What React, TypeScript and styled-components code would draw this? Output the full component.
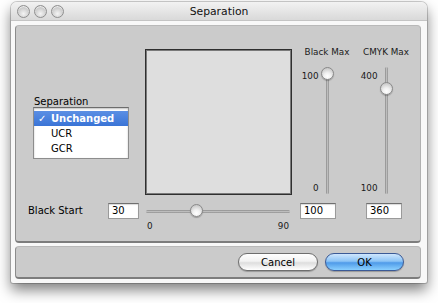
import React from "react";
import styled, { createGlobalStyle } from "styled-components";

const Global = createGlobalStyle`
  html, body { margin: 0; padding: 0; background: #ffffff; }
  body {
    width: 438px; height: 303px; overflow: hidden;
    font-family: "DejaVu Sans", "Lucida Grande", sans-serif;
    color: #000;
  }
  * { box-sizing: border-box; }
`;

const Page = styled.div`
  padding: 2px 0 0 11px;
`;

const Window = styled.div`
  width: 416px;
  height: 281px;
  background: #f8f8f8;
  border-radius: 6px 6px 2px 2px;
  box-shadow: 0 0 0 1px rgba(0, 0, 0, 0.18), 0 7px 14px rgba(0, 0, 0, 0.5);
  display: flex;
  flex-direction: column;
  overflow: hidden;
`;

const TitleBar = styled.div`
  height: 19px;
  flex: none;
  display: flex;
  align-items: center;
  position: relative;
  background: linear-gradient(#f2f2f2, #d9d9d9);
  border-bottom: 1px solid #c4c4c4;
`;

const Lights = styled.div`
  display: flex;
  gap: 4px;
  padding-left: 6px;
`;

const Light = styled.span`
  width: 13px;
  height: 13px;
  border-radius: 50%;
  border: 1px solid #8f8f8f;
  background: radial-gradient(circle at 50% 70%, #f4f4f4 0%, #cfcfcf 55%, #a9a9a9 100%);
  box-shadow: inset 0 1px 1px rgba(255, 255, 255, 0.8);
`;

const Title = styled.div`
  position: absolute;
  left: 0;
  right: 0;
  text-align: center;
  font-size: 10.8px;
  color: #111;
`;

const Body = styled.div`
  flex: 1;
  display: flex;
  flex-direction: column;
  gap: 3px;
  padding: 4px 6px 4px 4px;
`;

const Panel = styled.div<{ $h: number }>`
  height: ${(p) => p.$h}px;
  flex: none;
  background: #cbcbcb;
  border-radius: 4px;
  border-top: 1px solid #b9b9b9;
  border-left: 1px solid #8b8b8b;
  border-right: 1px solid #b0b0b0;
  border-bottom: 2px solid #7d7d7d;
`;

const Main = styled(Panel)`
  display: flex;
  flex-direction: column;
`;

const TopArea = styled.div`
  display: flex;
  align-items: flex-start;
  padding-top: 20px;
`;

const LeftCol = styled.div`
  margin-left: 18px;
  width: 111px;
  padding-top: 51px;
  display: flex;
  flex-direction: column;
`;

const Label = styled.div`
  font-size: 10px;
  line-height: 10px;
  height: 10px;
`;

const ListBox = styled.div`
  width: 96px;
  height: 52px;
  margin-left: -1px;
  background: #fff;
  border: 1px solid #8d8d8d;
  border-top-color: #6d6d6d;
  box-shadow: inset 0 1px 2px rgba(0, 0, 0, 0.25);
  padding-top: 3px;
`;

const Row = styled.div<{ $sel?: boolean }>`
  height: 15px;
  line-height: 15px;
  font-size: 10px;
  padding-left: 17px;
  position: relative;
  color: ${(p) => (p.$sel ? "#fff" : "#000")};
  font-weight: ${(p) => (p.$sel ? "bold" : "normal")};
  background: ${(p) => (p.$sel ? "linear-gradient(#5b8fe4, #3a74d6)" : "transparent")};
`;

const Check = styled.span`
  position: absolute;
  left: 4px;
  top: 0;
`;

const Preview = styled.div`
  width: 147px;
  height: 146px;
  margin-top: 3px;
  background: #dedede;
  border: 1px solid #2f2f2f;
  box-shadow: inset 0 0 0 1px #7a7a7a;
`;

const SliderCol = styled.div<{ $w: number; $ml?: number }>`
  width: ${(p) => p.$w}px;
  margin-left: ${(p) => p.$ml ?? 0}px;
  display: flex;
  flex-direction: column;
`;

const ColHead = styled.div`
  height: 12px;
  line-height: 12px;
  font-size: 8.8px;
  text-align: center;
  color: #1a1a1a;
  margin-bottom: 9px;
`;

const VBody = styled.div`
  height: 127px;
  display: grid;
  grid-template-columns: 1fr 13px 1fr;
`;

const VScale = styled.div`
  display: flex;
  flex-direction: column;
  justify-content: space-between;
  align-items: flex-end;
  padding: 4px 2px 1px 0;
  font-size: 8.8px;
  line-height: 10px;
  color: #1a1a1a;
`;

const VTrackWrap = styled.div`
  position: relative;
  display: flex;
  justify-content: center;
`;

const VTrack = styled.div`
  width: 3px;
  height: 100%;
  border-radius: 2px;
  background: linear-gradient(90deg, #8a8a8a, #bdbdbd, #8f8f8f);
`;

const Thumb = styled.div`
  position: absolute;
  width: 13px;
  height: 13px;
  border-radius: 50%;
  border: 1px solid #8a8a8a;
  background: radial-gradient(circle at 50% 75%, #ffffff 0%, #f0f0f0 35%, #c9c9c9 80%, #b5b5b5 100%);
  box-shadow: 0 1px 1px rgba(0, 0, 0, 0.25);
`;

const BottomRow = styled.div`
  display: flex;
  align-items: flex-start;
  margin-top: 8px;
  padding-left: 12px;
`;

const RowLabel = styled.div`
  width: 80px;
  font-size: 10px;
  line-height: 16px;
`;

const Field = styled.div<{ $w: number; $ml?: number }>`
  width: ${(p) => p.$w}px;
  height: 16px;
  margin-left: ${(p) => p.$ml ?? 0}px;
  background: #fff;
  border: 1px solid #9a9a9a;
  border-top-color: #6f6f6f;
  box-shadow: inset 0 1px 1px rgba(0, 0, 0, 0.15);
  font-size: 10px;
  line-height: 14px;
  padding-left: 3px;
`;

const HSlider = styled.div`
  width: 144px;
  margin-left: 7px;
  display: flex;
  flex-direction: column;
`;

const HTrackWrap = styled.div`
  position: relative;
  height: 16px;
  display: flex;
  align-items: center;
`;

const HTrack = styled.div`
  width: 100%;
  height: 3px;
  border-radius: 2px;
  background: linear-gradient(#8a8a8a, #bdbdbd, #8f8f8f);
`;

const HScale = styled.div`
  display: flex;
  justify-content: space-between;
  font-size: 8.8px;
  line-height: 10px;
  margin-top: 2px;
  padding: 0 1px 0 1px;
  color: #1a1a1a;
`;

const Footer = styled(Panel)`
  display: flex;
  justify-content: flex-end;
  align-items: center;
  gap: 7px;
  padding-right: 16px;
`;

const Button = styled.div<{ $primary?: boolean; $w: number }>`
  width: ${(p) => p.$w}px;
  height: 18px;
  border-radius: 9px;
  display: flex;
  align-items: center;
  justify-content: center;
  font-size: 10px;
  color: #000;
  border: 1px solid ${(p) => (p.$primary ? "#3b5a96" : "#6e6e6e")};
  background: ${(p) =>
    p.$primary
      ? "linear-gradient(#cfe6fd 0%, #8cc4f6 45%, #4f9be9 55%, #8ad0ff 100%)"
      : "linear-gradient(#ffffff 0%, #f2f2f2 45%, #dedede 55%, #ffffff 100%)"};
  box-shadow: 0 1px 1px rgba(0, 0, 0, 0.25);
`;

const VSlider: React.FC<{ min: number; max: number; value: number; top: string; bottom: string }> = ({
  min,
  max,
  value,
  top,
  bottom,
}) => {
  const frac = (value - min) / (max - min);
  const t = (1 - frac) * (127 - 13);
  return (
    <VBody>
      <VScale>
        <span>{top}</span>
        <span>{bottom}</span>
      </VScale>
      <VTrackWrap>
        <VTrack />
        <Thumb style={{ top: t, left: 0 }} />
      </VTrackWrap>
      <div />
    </VBody>
  );
};

export default function App() {
  const hFrac = 30 / 90;
  return (
    <>
      <Global />
      <Page>
        <Window>
          <TitleBar>
            <Lights>
              <Light />
              <Light />
              <Light />
            </Lights>
            <Title>Separation</Title>
          </TitleBar>
          <Body>
            <Main $h={218}>
              <TopArea>
                <LeftCol>
                  <Label>Separation</Label>
                  <ListBox>
                    <Row $sel>
                      <Check>✓</Check>Unchanged
                    </Row>
                    <Row>UCR</Row>
                    <Row>GCR</Row>
                  </ListBox>
                </LeftCol>
                <Preview />
                <SliderCol $w={58} $ml={6}>
                  <ColHead>Black Max</ColHead>
                  <VSlider min={0} max={100} value={100} top="100" bottom="0" />
                </SliderCol>
                <SliderCol $w={60}>
                  <ColHead>CMYK Max</ColHead>
                  <VSlider min={100} max={400} value={360} top="400" bottom="100" />
                </SliderCol>
              </TopArea>
              <BottomRow>
                <RowLabel>Black Start</RowLabel>
                <Field $w={31}>30</Field>
                <HSlider>
                  <HTrackWrap>
                    <HTrack />
                    <Thumb style={{ left: hFrac * (144 - 13), top: 1 }} />
                  </HTrackWrap>
                  <HScale>
                    <span>0</span>
                    <span>90</span>
                  </HScale>
                </HSlider>
                <Field $w={36} $ml={10}>
                  100
                </Field>
                <Field $w={36} $ml={30}>
                  360
                </Field>
              </BottomRow>
            </Main>
            <Footer $h={33}>
              <Button $w={80}>Cancel</Button>
              <Button $w={79} $primary>
                OK
              </Button>
            </Footer>
          </Body>
        </Window>
      </Page>
    </>
  );
}
